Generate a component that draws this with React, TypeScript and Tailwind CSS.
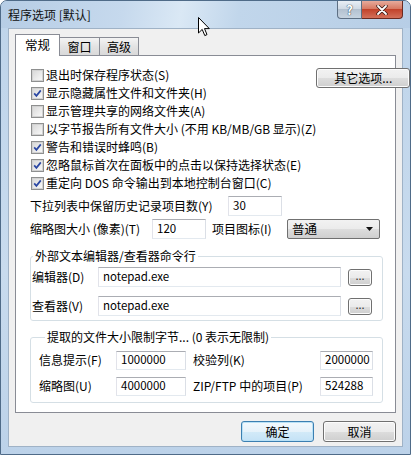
import React from 'react';

type CheckRowProps = { checked?: boolean; label: string };

function CheckRow({ checked, label }: CheckRowProps) {
  return (
    <div className="flex h-[18px] items-center">
      <span className="flex h-[13px] w-[13px] shrink-0 items-center justify-center border border-[#8e8f8f] bg-[#f4f4f4]">
        <span className="flex h-[11px] w-[11px] items-center justify-center border border-[#d2d2d2] bg-[linear-gradient(135deg,#d9d9d9,#f8f8f8)]">
          {checked && (
            <svg width="9" height="9" viewBox="0 0 9 9">
              <path d="M1.2 4.4 L3.4 6.9 L7.8 1.4" fill="none" stroke="#2b47a3" strokeWidth="1.7" />
            </svg>
          )}
        </span>
      </span>
      <span className="ml-[2px] whitespace-nowrap">{label}</span>
    </div>
  );
}

function TextBox({ value, className }: { value: string; className: string }) {
  return (
    <div
      className={`flex shrink-0 items-center border border-[#abadb3] border-b-[#e3e9ef] border-l-[#e2e3ea] border-r-[#dbdfe6] bg-white pl-[4px] text-[11.5px] ${className}`}
    >
      {value}
    </div>
  );
}

function Button({ children, primary, className }: { children: React.ReactNode; primary?: boolean; className: string }) {
  if (primary) {
    return (
      <button className={`flex items-center justify-center rounded-[3px] border border-[#3c7fb1] bg-[linear-gradient(180deg,#f3f9fd_0%,#e6f2fa_50%,#d3eaf8_51%,#c4e2f6_100%)] shadow-[inset_0_0_0_1px_#b9e1f6] ${className}`}>
        {children}
      </button>
    );
  }
  return (
    <button className={`flex items-center justify-center rounded-[3px] border border-[#707070] bg-[linear-gradient(180deg,#f2f2f2_0%,#ebebeb_50%,#dddddd_51%,#cfcfcf_100%)] shadow-[inset_0_0_0_1px_#fcfcfc] ${className}`}>
      {children}
    </button>
  );
}

const options = [
  { checked: false, label: '退出时保存程序状态(S)' },
  { checked: true, label: '显示隐藏属性文件和文件夹(H)' },
  { checked: false, label: '显示管理共享的网络文件夹(A)' },
  { checked: false, label: '以字节报告所有文件大小 (不用 KB/MB/GB 显示)(Z)' },
  { checked: true, label: '警告和错误时蜂鸣(B)' },
  { checked: true, label: '忽略鼠标首次在面板中的点击以保持选择状态(E)' },
  { checked: true, label: '重定向 DOS 命令输出到本地控制台窗口(C)' },
];

export default function App() {
  return (
    <div className="relative h-[455px] w-[411px] overflow-hidden rounded-t-[7px] border border-[#4f6b88] bg-[linear-gradient(180deg,#bed4ea,#c8dbee_60%,#bcd2e9)] font-['Noto_Sans_CJK_SC','Noto_Sans',sans-serif] text-[12px] leading-none text-black">
      {/* title bar */}
      <div className="flex h-[27px] items-start justify-between bg-[linear-gradient(100deg,#b6cde5_0%,#c6d9ed_30%,#dae8f5_44%,#c1d6eb_58%,#b7cee6_100%)] pl-[7px] pr-[7px]">
        <div className="mt-[8px] whitespace-nowrap text-[12px] text-[#111]">程序选项 [默认]</div>
        <div className="flex">
          <div className="flex h-[18px] w-[25px] items-center justify-center rounded-bl-[4px] border border-t-0 border-[#5d6f83] bg-[linear-gradient(180deg,#e8eef5_0%,#d0dae5_45%,#b3c1d0_50%,#c6d3e0_100%)] text-[13px] font-bold text-white [text-shadow:0_0_1px_#2c3e50,0_0_1px_#2c3e50]">
            ?
          </div>
          <div className="flex h-[18px] w-[41px] items-center justify-center rounded-br-[4px] border border-l-0 border-t-0 border-[#6b2a20] bg-[linear-gradient(180deg,#e7ab9c_0%,#d77a63_45%,#c2432b_50%,#d3705a_100%)]">
            <svg width="12" height="10" viewBox="0 0 12 10">
              <path d="M2 1 L10 9 M10 1 L2 9" stroke="#3a1a14" strokeWidth="3.4" strokeLinecap="round" />
              <path d="M2 1 L10 9 M10 1 L2 9" stroke="#ffffff" strokeWidth="1.8" strokeLinecap="round" />
            </svg>
          </div>
        </div>
      </div>

      {/* client area */}
      <div className="mx-[7px] flex h-[419px] flex-col border border-[#9fb2c6] bg-[#f0f0f0]">
        {/* tabs */}
        <div className="flex items-end pl-[6px] pt-[5px]">
          <div className="relative z-10 -mb-px flex h-[22px] w-[45px] items-center justify-center border border-b-0 border-[#898c95] bg-white pb-[1px] text-[12.5px]">
            常规
          </div>
          <div className="-ml-px flex h-[18px] w-[41px] items-center justify-center border border-b-0 border-[#898c95] bg-[linear-gradient(180deg,#f4f4f4,#e3e3e3_50%,#d9d9d9)]">
            窗口
          </div>
          <div className="-ml-px flex h-[18px] w-[40px] items-center justify-center border border-b-0 border-[#898c95] bg-[linear-gradient(180deg,#f4f4f4,#e3e3e3_50%,#d9d9d9)]">
            高级
          </div>
        </div>

        {/* tab page */}
        <div className="mx-[6px] flex h-[358px] flex-col border border-[#898c95] bg-white">
          <div className="flex justify-between pl-[15px] pt-[10px]">
            <div className="flex flex-col">
              {options.map((o) => (
                <CheckRow key={o.label} checked={o.checked} label={o.label} />
              ))}
            </div>
            <Button className="mr-[13px] mt-[2px] h-[20px] w-[94px] shrink-0">其它选项...</Button>
          </div>

          <div className="mt-[4px] flex h-[20px] items-center pl-[14px]">
            <span className="w-[198px] whitespace-nowrap">下拉列表中保留历史记录项目数(Y)</span>
            <TextBox value="30" className="h-[20px] w-[54px]" />
          </div>

          <div className="mt-[3px] flex h-[20px] items-center pl-[14px]">
            <span className="w-[122px] whitespace-nowrap">缩略图大小 (像素)(T)</span>
            <TextBox value="120" className="h-[20px] w-[54px]" />
            <span className="ml-[6px] w-[75px] whitespace-nowrap">项目图标(I)</span>
            <div className="flex h-[20px] w-[93px] items-center justify-between rounded-[2px] border border-[#707070] bg-[linear-gradient(180deg,#f2f2f2_0%,#ebebeb_50%,#dddddd_51%,#cfcfcf_100%)] pl-[4px] pr-[6px] text-[12.5px]">
              <span>普通</span>
              <svg width="7" height="4" viewBox="0 0 7 4">
                <path d="M0 0 H7 L3.5 4 Z" fill="#111" />
              </svg>
            </div>
          </div>

          {/* external editor / viewer */}
          <fieldset className="ml-[14px] mr-[12px] mt-[9px] rounded-[3px] border border-[#d5dfe5] pb-[4px] pl-[1px] pr-[9px] pt-[3px]">
            <legend className="ml-[1px] px-[2px] leading-[16px]">外部文本编辑器/查看器命令行</legend>
            <div className="flex h-[20px] items-center">
              <span className="w-[66px] whitespace-nowrap">编辑器(D)</span>
              <TextBox value="notepad.exe" className="h-[20px] w-[243px]" />
              <Button className="ml-[7px] h-[17px] w-[24px] pb-[3px] text-[11px] text-[#333]">...</Button>
            </div>
            <div className="mt-[9px] flex h-[20px] items-center">
              <span className="w-[66px] whitespace-nowrap">查看器(V)</span>
              <TextBox value="notepad.exe" className="h-[20px] w-[243px]" />
              <Button className="ml-[7px] h-[17px] w-[24px] pb-[3px] text-[11px] text-[#333]">...</Button>
            </div>
          </fieldset>

          {/* size limits */}
          <fieldset className="ml-[14px] mr-[12px] mt-[8px] rounded-[3px] border border-[#d5dfe5] pb-[6px] pl-[8px] pt-[5px]">
            <legend className="ml-[6px] px-[2px] leading-[16px]">提取的文件大小限制字节... (0 表示无限制)</legend>
            <div className="flex h-[20px] items-center">
              <span className="w-[77px] whitespace-nowrap">信息提示(F)</span>
              <TextBox value="1000000" className="h-[19px] w-[70px]" />
              <span className="ml-[7px] w-[127px] whitespace-nowrap">校验列(K)</span>
              <TextBox value="2000000" className="h-[19px] w-[53px]" />
            </div>
            <div className="mt-[6px] flex h-[20px] items-center">
              <span className="w-[77px] whitespace-nowrap">缩略图(U)</span>
              <TextBox value="4000000" className="h-[19px] w-[70px]" />
              <span className="ml-[7px] w-[127px] whitespace-nowrap">ZIP/FTP 中的项目(P)</span>
              <TextBox value="524288" className="h-[19px] w-[53px]" />
            </div>
          </fieldset>
        </div>

        {/* dialog buttons */}
        <div className="mr-[6px] mt-[8px] flex justify-end gap-[9px]">
          <Button primary className="h-[21px] w-[73px]">确定</Button>
          <Button className="h-[21px] w-[73px]">取消</Button>
        </div>
      </div>

      {/* mouse pointer */}
      <svg className="absolute left-[197px] top-[16px]" width="12" height="20" viewBox="0 0 12 20">
        <path d="M0.5 0.5 L0.5 16 L4.2 12.4 L6.8 18.6 L9 17.6 L6.5 11.6 L11.3 11.6 Z" fill="#fff" stroke="#000" strokeWidth="1" strokeLinejoin="round" />
      </svg>
    </div>
  );
}
